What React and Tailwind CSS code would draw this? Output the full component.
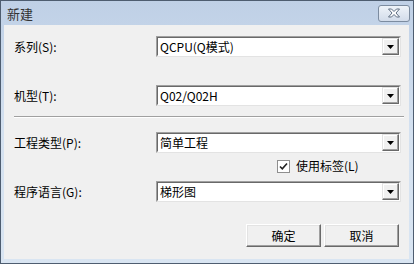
const font = { fontFamily: '"Noto Sans CJK SC", "Liberation Sans", sans-serif' };

const Combo = ({ value }) => (
  <div className="w-[245px] h-[21px] flex bg-white border border-t-[#a0a0a0] border-l-[#a0a0a0] border-r-[#e3e3e3] border-b-[#e3e3e3]">
    <div className="flex-1 flex border border-t-[#696969] border-l-[#696969] border-r-white border-b-white">
      <div className="flex-1 pl-[2px] text-[12px] leading-[17px] text-black truncate">{value}</div>
      <div className="w-[17px] h-[17px] bg-[#f0f0f0] flex items-center justify-center border border-t-[#e3e3e3] border-l-[#e3e3e3] border-r-[#696969] border-b-[#696969] shadow-[inset_-1px_-1px_0_#a0a0a0,inset_1px_1px_0_#ffffff]">
        <svg width="7" height="4" viewBox="0 0 7 4"><path d="M0 0h7L3.5 4z" fill="#000" /></svg>
      </div>
    </div>
  </div>
);

const Row = ({ label, value, className }) => (
  <div className={"flex items-center " + className}>
    <div className="w-[142px] text-[12px] text-black">{label}</div>
    <Combo value={value} />
  </div>
);

const Button = ({ children }) => (
  <button className="w-[75px] h-[23px] bg-[#f0f0f0] text-[12px] text-black border border-t-white border-l-white border-r-[#696969] border-b-[#696969] shadow-[inset_-1px_-1px_0_#a0a0a0,inset_1px_1px_0_#e3e3e3]">
    {children}
  </button>
);

export default function App() {
  return (
    <div style={font} className="w-[414px] h-[264px] flex flex-col border border-[#4e5d70] bg-gradient-to-b from-[#bfd0e6] via-[#d4e1f0] to-[#d9e5f2]">
      <div className="h-[24px] flex items-center justify-between pl-[6px] pr-[3px]">
        <span className="text-[13px] text-[#333] leading-none">新建</span>
        <div className="w-[32px] h-[17px] rounded-[3px] border border-[#7c8ca0] bg-gradient-to-b from-[#eef3f9] to-[#d2dcea] flex items-center justify-center">
          <svg width="14" height="10" viewBox="0 0 14 10">
            <path d="M1.5 1h3l2.5 2.5L9.5 1h3L9 5l3.5 4h-3L7 6.5 4.5 9h-3L5 5z" fill="#fff" stroke="#5f6e82" strokeWidth="1" strokeLinejoin="round" />
          </svg>
        </div>
      </div>
      <div className="ml-[3px] mr-[4px] h-[234px] bg-[#f0f0f0] pl-[10px] flex flex-col">
        <Row className="mt-[11px]" label="系列(S):" value="QCPU(Q模式)" />
        <Row className="mt-[28px]" label="机型(T):" value="Q02/Q02H" />
        <div className="mt-[10px] mr-[5px] h-[2px] border-t border-[#a0a0a0] border-b border-b-white" />
        <Row className="mt-[14px]" label="工程类型(P):" value="简单工程" />
        <div className="mt-[6px] ml-[263px] flex items-center gap-[6px] h-[14px]">
          <div className="w-[13px] h-[13px] bg-white border border-[#8f8f8f] flex items-center justify-center">
            <svg width="9" height="9" viewBox="0 0 9 9"><path d="M1 4.5l2.3 2.3L8 1.5" fill="none" stroke="#222" strokeWidth="1.6" /></svg>
          </div>
          <span className="text-[12px] text-black">使用标签(L)</span>
        </div>
        <Row className="mt-[8px]" label="程序语言(G):" value="梯形图" />
        <div className="mt-[22px] ml-[232px] flex gap-[3px]">
          <Button>确定</Button>
          <Button>取消</Button>
        </div>
      </div>
    </div>
  );
}
